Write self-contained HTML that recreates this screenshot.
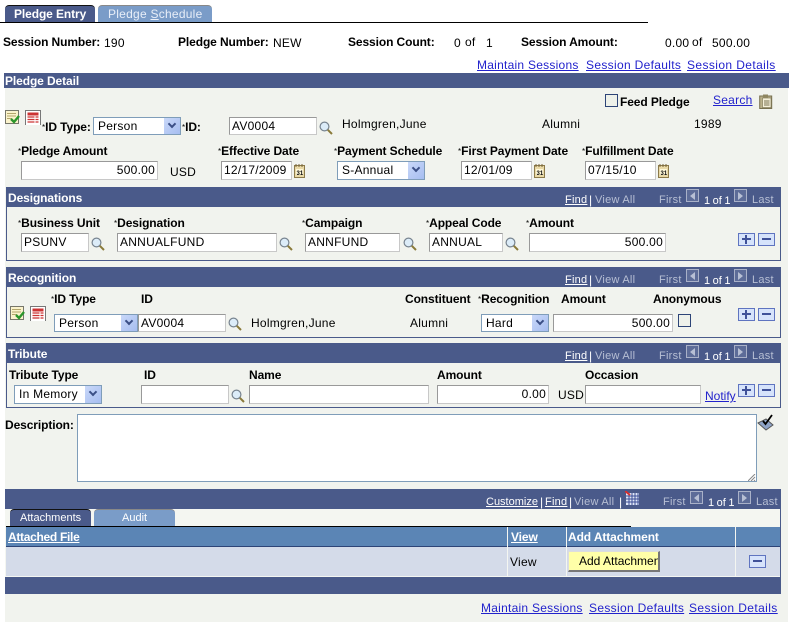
<!DOCTYPE html>
<html><head><meta charset="utf-8"><title>Pledge Entry</title>
<style>
html,body{margin:0;padding:0;background:#fff}
#p{position:relative;width:793px;height:622px;overflow:hidden;background:#fff;font-family:"Liberation Sans",Arial,sans-serif;font-size:12px;letter-spacing:.25px;color:#000}
#p div,#p span.t,#p span.b,#p a,#p svg{position:absolute}
.t,.b,a{line-height:14px;white-space:nowrap}
.b{font-weight:bold;letter-spacing:-.1px}
small{font-weight:normal;font-size:8px;letter-spacing:0;vertical-align:1px}
a{color:#2222cc;text-decoration:underline}
.bar{background:#4a5a8a}
.w{color:#fff}
.g{color:#b7bfd4}
.nw{color:#fff;text-decoration:underline}
.n{font-size:11px}
.c{font-size:11px;word-spacing:-.5px;letter-spacing:0}
.box{border:1px solid #4a5a8a;box-sizing:border-box}
.in{background:#fff;box-sizing:border-box;border:1px solid #c8c8c8;border-top-color:#999;border-left-color:#999;line-height:16px;padding-left:2px;white-space:nowrap;overflow:hidden}
.r{text-align:right;padding:0 2px 0 0}
.sel{background:#fff;box-sizing:border-box;border:1px solid #7f9db9;line-height:16px;padding-left:4px}
.sel i{position:absolute;right:0;top:0;width:16px;bottom:0;background:linear-gradient(135deg,#c9d8f9,#a6bdf0);font-style:normal}
.sel i:after{content:"";position:absolute;left:5px;top:3px;width:4px;height:4px;border:solid #3b4f86;border-width:0 2px 2px 0;transform:rotate(45deg)}
.pm{width:17px;height:13px;box-sizing:border-box;border:1px solid #5f74c0;background:#d6e3fb}
.pm:before{content:"";position:absolute;left:3px;right:3px;top:4px;height:2px;background:#3f5199}
.pl:after{content:"";position:absolute;left:6px;width:2px;top:1px;bottom:1px;background:#3f5199}
.nb{width:13px;height:13px;box-sizing:border-box;border:1px solid #a9b1c8;background:#5d6c98}
.nb:after{content:"";position:absolute;top:2px;border:solid transparent;border-width:4px 0}
.pv:after{left:3px;border-right:5px solid #b7bfd4}
.nx:after{left:3px;border-left:5px solid #b7bfd4}
.tt{font-size:11px;letter-spacing:0}
</style></head><body>
<svg width="0" height="0" style="position:absolute;left:0;top:0;display:block">
<defs>
<symbol id="lk" viewBox="0 0 14 14"><circle cx="5.500" cy="5.500" r="4.400" fill="#dcecf8" stroke="#77838f" stroke-width="1.200"/><path d="M8.800 8.800L13 13" stroke="#8a7a3a" stroke-width="2"/></symbol>
<symbol id="cal" viewBox="0 0 12 14"><rect x=".5" y="1.500" width="10" height="12" fill="#e9d9a6" stroke="#8c7a4a"/><path d="M2 0v3M5 0v3M8 0v3" stroke="#77653a"/><rect x="2" y="5" width="7" height="6" fill="#fff8d8"/><text x="2.500" y="11" font-size="6" font-weight="bold" font-family="Liberation Sans" letter-spacing="0">31</text></symbol>
<symbol id="chk" viewBox="0 0 16 15"><rect x=".5" y=".5" width="13" height="13" fill="#fbf3cc" stroke="#77776a"/><path d="M2 3.500h9M2 6h9M2 8.500h5" stroke="#b3a66a"/><path d="M6 9l3 3 5-6" fill="none" stroke="#2b962b" stroke-width="2.400"/></symbol>
<symbol id="rep" viewBox="0 0 16 15"><path d="M.5 15V.5h15V15" fill="#fff" stroke="#777"/><rect x="2.500" y="2.500" width="11" height="3" fill="#cc3333"/><path d="M2.500 7h7M10.500 7h3M2.500 9.500h7M10.500 9.500h3M2.500 12h7M10.500 12h3" stroke="#cc3333" stroke-width="1.200"/></symbol>
<symbol id="clip" viewBox="0 0 14 15"><rect x=".7" y="2" width="12" height="12.500" fill="#b9b08a" stroke="#77704f"/><rect x="3.500" y="4" width="8.500" height="9.500" fill="#f4efd8" stroke="#77704f" stroke-width=".6"/><rect x="4" y=".5" width="5" height="3" fill="#8e8660"/><path d="M5 7h5.500M5 9h5.500M5 11h5.500" stroke="#77704f"/></symbol>
</defs></svg>
<div id="p">
<!-- tabs -->
<div style="left:5px;top:5px;width:90px;height:17px;background:#4a5a8a;border-radius:4px 4px 0 0;border-top:1px solid #111;box-sizing:border-box"></div>
<span class="b w" style="left:14px;top:7px">Pledge Entry</span>
<div style="left:98px;top:5px;width:114px;height:17px;background:#7a9cc8;border-radius:4px 4px 0 0;border-top:1px solid #888;box-sizing:border-box"></div>
<span class="t" style="left:108px;top:7px;color:#e8eef8">Pledge <u>S</u>chedule</span>
<div style="left:0;top:22px;width:648px;height:1px;background:#000"></div>

<span class="b" style="left:3px;top:35px">Session Number:</span><span class="t" style="left:104px;top:36px">190</span>
<span class="b" style="left:178px;top:35px">Pledge Number:</span><span class="t" style="left:273px;top:36px">NEW</span>
<span class="b" style="left:348px;top:35px">Session Count:</span><span class="t" style="left:454px;top:36px">0</span><span class="t" style="left:465px;top:35px">of</span><span class="t" style="left:486px;top:36px">1</span>
<span class="b" style="left:521px;top:35px">Session Amount:</span><span class="t" style="left:665px;top:36px">0.00</span><span class="t" style="left:692px;top:35px">of</span><span class="t" style="left:712px;top:36px">500.00</span>
<a style="left:477px;top:58px">Maintain Sessions</a><a style="left:586px;top:58px;letter-spacing:.32px">Session Defaults</a><a style="left:687px;top:58px;letter-spacing:.4px">Session Details</a>

<!-- main panel -->
<div style="left:5px;top:88px;width:783px;height:534px;background:#f1f3ee"></div>
<div class="bar" style="left:4px;top:73px;width:785px;height:15px"></div>
<span class="b w" style="left:5px;top:74px">Pledge Detail</span>

<div style="left:605px;top:94px;width:13px;height:13px;border:1px solid #2d4477;box-sizing:border-box;background:#eef1ea"></div>
<span class="b" style="left:620px;top:95px">Feed Pledge</span>
<a style="left:713px;top:93px">Search</a>
<svg style="left:759px;top:94px" width="14" height="15"><use href="#clip"/></svg>

<svg style="left:5px;top:110px" width="16" height="15"><use href="#chk"/></svg>
<svg style="left:25px;top:110px" width="16" height="15"><use href="#rep"/></svg>
<span class="b" style="left:42px;top:120px"><small>*</small>ID Type:</span>
<div class="sel" style="left:93px;top:117px;width:88px;height:18px">Person<i></i></div>
<span class="b" style="left:182px;top:120px"><small>*</small>ID:</span>
<div class="in" style="left:229px;top:117px;width:88px;height:18px">AV0004</div>
<svg style="left:319px;top:121px" width="14" height="14"><use href="#lk"/></svg>
<span class="t" style="left:342px;top:117px">Holmgren,June</span>
<span class="t" style="left:542px;top:117px">Alumni</span>
<span class="t" style="left:694px;top:117px">1989</span>

<span class="b" style="left:18px;top:144px"><small>*</small>Pledge Amount</span>
<span class="b" style="left:218px;top:144px"><small>*</small>Effective Date</span>
<span class="b" style="left:334px;top:144px"><small>*</small>Payment Schedule</span>
<span class="b" style="left:458px;top:144px"><small>*</small>First Payment Date</span>
<span class="b" style="left:582px;top:144px"><small>*</small>Fulfillment Date</span>
<div class="in r" style="left:21px;top:161px;width:137px;height:19px">500.00</div>
<span class="t" style="left:170px;top:165px">USD</span>
<div class="in" style="left:221px;top:161px;width:71px;height:19px">12/17/2009</div>
<svg style="left:294px;top:164px" width="12" height="14"><use href="#cal"/></svg>
<div class="sel" style="left:337px;top:161px;width:88px;height:19px">S-Annual<i></i></div>
<div class="in" style="left:461px;top:161px;width:71px;height:19px">12/01/09</div>
<svg style="left:534px;top:164px" width="12" height="14"><use href="#cal"/></svg>
<div class="in" style="left:585px;top:161px;width:71px;height:19px">07/15/10</div>
<svg style="left:658px;top:164px" width="12" height="14"><use href="#cal"/></svg>

<!-- Designations -->
<div class="box" style="left:6px;top:187px;width:775px;height:74px"></div>
<div class="bar" style="left:6px;top:187px;width:775px;height:20px"></div>
<span class="b w" style="left:8px;top:191px">Designations</span>
<a class="nw n" style="left:565px;top:193px">Find</a><span class="t w" style="left:589px;top:193px">|</span><span class="t g n" style="left:595px;top:193px">View All</span>
<span class="t g n" style="left:659px;top:193px">First</span><div class="nb pv" style="left:686px;top:189px"></div><span class="t w c" style="left:704px;top:194px">1 of 1</span><div class="nb nx" style="left:734px;top:189px"></div><span class="t g n" style="left:752px;top:193px">Last</span>
<span class="b" style="left:18px;top:216px"><small>*</small>Business Unit</span>
<span class="b" style="left:114px;top:216px"><small>*</small>Designation</span>
<span class="b" style="left:302px;top:216px"><small>*</small>Campaign</span>
<span class="b" style="left:426px;top:216px"><small>*</small>Appeal Code</span>
<span class="b" style="left:526px;top:216px"><small>*</small>Amount</span>
<div class="in" style="left:21px;top:233px;width:68px;height:19px">PSUNV</div>
<svg style="left:91px;top:237px" width="14" height="14"><use href="#lk"/></svg>
<div class="in" style="left:117px;top:233px;width:160px;height:19px">ANNUALFUND</div>
<svg style="left:279px;top:237px" width="14" height="14"><use href="#lk"/></svg>
<div class="in" style="left:305px;top:233px;width:95px;height:19px">ANNFUND</div>
<svg style="left:403px;top:237px" width="14" height="14"><use href="#lk"/></svg>
<div class="in" style="left:429px;top:233px;width:74px;height:19px">ANNUAL</div>
<svg style="left:505px;top:237px" width="14" height="14"><use href="#lk"/></svg>
<div class="in r" style="left:529px;top:233px;width:137px;height:19px">500.00</div>
<div class="pm pl" style="left:738px;top:233px"></div><div class="pm" style="left:758px;top:233px"></div>

<!-- Recognition -->
<div class="box" style="left:6px;top:267px;width:775px;height:71px"></div>
<div class="bar" style="left:6px;top:267px;width:775px;height:20px"></div>
<span class="b w" style="left:8px;top:271px">Recognition</span>
<a class="nw n" style="left:565px;top:273px">Find</a><span class="t w" style="left:589px;top:273px">|</span><span class="t g n" style="left:595px;top:273px">View All</span>
<span class="t g n" style="left:659px;top:273px">First</span><div class="nb pv" style="left:686px;top:269px"></div><span class="t w c" style="left:704px;top:274px">1 of 1</span><div class="nb nx" style="left:734px;top:269px"></div><span class="t g n" style="left:752px;top:273px">Last</span>
<svg style="left:10px;top:306px" width="16" height="15"><use href="#chk"/></svg>
<svg style="left:30px;top:306px" width="16" height="15"><use href="#rep"/></svg>
<span class="b" style="left:51px;top:292px"><small>*</small>ID Type</span>
<span class="b" style="left:141px;top:292px">ID</span>
<span class="b" style="left:405px;top:292px">Constituent</span>
<span class="b" style="left:478px;top:292px"><small>*</small>Recognition</span>
<span class="b" style="left:561px;top:292px">Amount</span>
<span class="b" style="left:653px;top:292px">Anonymous</span>
<div class="sel" style="left:54px;top:314px;width:84px;height:18px">Person<i></i></div>
<div class="in" style="left:138px;top:314px;width:88px;height:18px">AV0004</div>
<svg style="left:228px;top:317px" width="14" height="14"><use href="#lk"/></svg>
<span class="t" style="left:251px;top:316px">Holmgren,June</span>
<span class="t" style="left:410px;top:316px">Alumni</span>
<div class="sel" style="left:481px;top:314px;width:68px;height:18px">Hard<i></i></div>
<div class="in r" style="left:553px;top:314px;width:120px;height:18px">500.00</div>
<div style="left:678px;top:314px;width:13px;height:13px;border:1px solid #2d4477;box-sizing:border-box;background:#eef1ea"></div>
<div class="pm pl" style="left:738px;top:308px"></div><div class="pm" style="left:758px;top:308px"></div>

<!-- Tribute -->
<div class="box" style="left:6px;top:343px;width:775px;height:65px"></div>
<div class="bar" style="left:6px;top:343px;width:775px;height:20px"></div>
<span class="b w" style="left:8px;top:347px">Tribute</span>
<a class="nw n" style="left:565px;top:349px">Find</a><span class="t w" style="left:589px;top:349px">|</span><span class="t g n" style="left:595px;top:349px">View All</span>
<span class="t g n" style="left:659px;top:349px">First</span><div class="nb pv" style="left:686px;top:345px"></div><span class="t w c" style="left:704px;top:350px">1 of 1</span><div class="nb nx" style="left:734px;top:345px"></div><span class="t g n" style="left:752px;top:349px">Last</span>
<span class="b" style="left:9px;top:368px">Tribute Type</span>
<span class="b" style="left:144px;top:368px">ID</span>
<span class="b" style="left:249px;top:368px">Name</span>
<span class="b" style="left:437px;top:368px">Amount</span>
<span class="b" style="left:585px;top:368px">Occasion</span>
<div class="sel" style="left:14px;top:385px;width:88px;height:19px">In Memory<i></i></div>
<div class="in" style="left:141px;top:385px;width:88px;height:19px"></div>
<svg style="left:231px;top:389px" width="14" height="14"><use href="#lk"/></svg>
<div class="in" style="left:249px;top:385px;width:180px;height:19px"></div>
<div class="in r" style="left:437px;top:385px;width:112px;height:19px">0.00</div>
<span class="t" style="left:558px;top:388px">USD</span>
<div class="in" style="left:585px;top:385px;width:116px;height:19px"></div>
<a style="left:705px;top:389px;letter-spacing:0">Notify</a>
<div class="pm pl" style="left:738px;top:384px"></div><div class="pm" style="left:758px;top:384px"></div>

<!-- Description -->
<span class="b" style="left:5px;top:418px">Description:</span>
<div style="left:77px;top:414px;width:680px;height:68px;box-sizing:border-box;background:#fff;border:1px solid #7f9db9"></div>
<svg style="left:748px;top:474px" width="8" height="7"><path d="M0 7L7 0M3 7L7 3M6 7L7 6" stroke="#888" stroke-width="1"/></svg>
<svg style="left:757px;top:413px" width="17" height="18"><path d="M1 10L9 6l7 6-7 5z" fill="#8ea3c8" stroke="#555"/><path d="M6 8l2.500 3 6.500-9" fill="none" stroke="#000" stroke-width="1.800"/></svg>

<!-- Grid -->
<div class="bar" style="left:5px;top:489px;width:776px;height:20px"></div>
<a class="nw n" style="left:486px;top:495px;letter-spacing:0">Customize</a><span class="t w" style="left:540px;top:495px">|</span><a class="nw n" style="left:545px;top:495px">Find</a><span class="t w" style="left:569px;top:495px">|</span><span class="t g n" style="left:574px;top:495px">View All</span><span class="t w" style="left:619px;top:495px">|</span>
<svg style="left:625px;top:491px" width="15" height="14"><rect x="1" y="2" width="13" height="12" fill="#dfe6f6"/><path d="M1 5h13M1 8h13M1 11h13M4 2v12M7 2v12M10 2v12M13 2v12" stroke="#3b4d96"/><path d="M0 0l5 4" stroke="#d92f2f" stroke-width="2"/></svg>
<span class="t g n" style="left:663px;top:495px">First</span><div class="nb pv" style="left:690px;top:491px"></div><span class="t w c" style="left:708px;top:496px">1 of 1</span><div class="nb nx" style="left:738px;top:491px"></div><span class="t g n" style="left:756px;top:495px">Last</span>

<div style="left:5px;top:509px;width:776px;height:68px;background:#f4f6f1;border-right:1px solid #4a5a8a;box-sizing:border-box"></div>
<div style="left:10px;top:509px;width:81px;height:17px;background:#4a5a8a;border-top:1px solid #111;border-radius:4px 4px 0 0;box-sizing:border-box"></div>
<span class="t w tt" style="left:20px;top:511px">Attachments</span>
<div style="left:94px;top:509px;width:81px;height:17px;background:#7a9cc8;border-top:1px solid #888;border-radius:4px 4px 0 0;box-sizing:border-box"></div>
<span class="t w tt" style="left:122px;top:511px">Audit</span>
<div style="left:6px;top:526px;width:625px;height:1px;background:#000"></div>
<div style="left:6px;top:527px;width:774px;height:20px;background:#5b85b5;border-bottom:1px solid #2d4477;box-sizing:border-box"></div>
<div style="left:6px;top:547px;width:774px;height:29px;background:#d4dbe9"></div>
<div style="left:507px;top:527px;width:1px;height:49px;background:#f4f6f1"></div>
<div style="left:566px;top:527px;width:1px;height:49px;background:#f4f6f1"></div>
<div style="left:735px;top:527px;width:1px;height:49px;background:#f4f6f1"></div>
<a class="nw b" style="left:8px;top:530px;letter-spacing:-.3px">Attached File</a>
<a class="nw b" style="left:511px;top:530px">View</a>
<span class="b w" style="left:568px;top:530px">Add Attachment</span>
<span class="t" style="left:510px;top:555px">View</span>
<div style="left:568px;top:551px;width:92px;height:21px;box-sizing:border-box;background:#ffffa8;border:1px solid;border-color:#ddd #777 #777 #ddd;border-width:1px 2px 2px 1px;line-height:18px;padding-left:10px;letter-spacing:0;white-space:nowrap;overflow:hidden">Add Attachment</div>
<div class="pm" style="left:749px;top:555px"></div>
<div class="bar" style="left:5px;top:577px;width:776px;height:17px"></div>
<a style="left:481px;top:601px">Maintain Sessions</a><a style="left:589px;top:601px;letter-spacing:.32px">Session Defaults</a><a style="left:689px;top:601px;letter-spacing:.4px">Session Details</a>
</div>
</body></html>
